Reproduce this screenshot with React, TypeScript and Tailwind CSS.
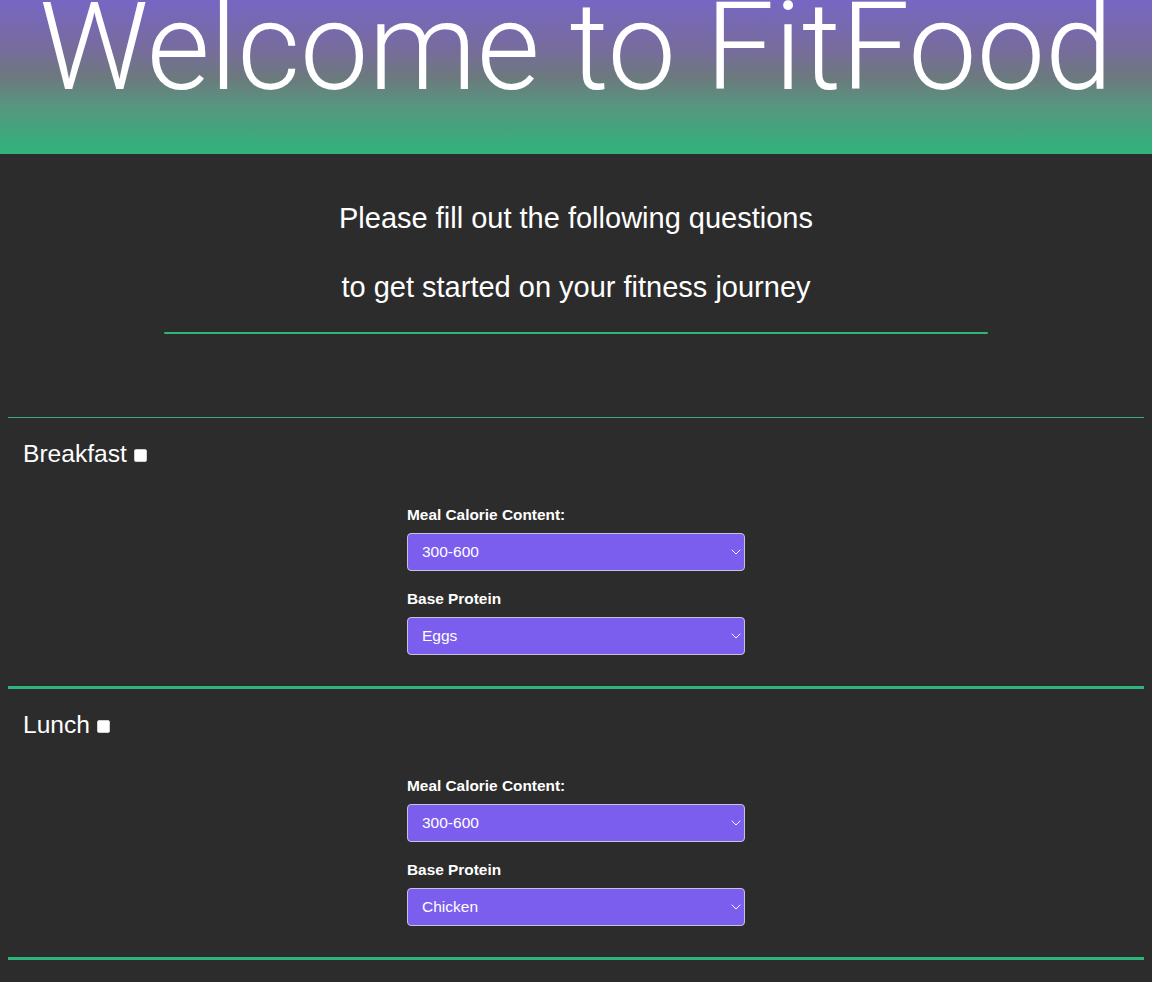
import React from "react";

type Meal = {
  name: string;
  calories: string;
  protein: string;
};

const meals: Meal[] = [
  { name: "Breakfast", calories: "300-600", protein: "Eggs" },
  { name: "Lunch", calories: "300-600", protein: "Chicken" },
];

const calorieOptions = ["0-300", "300-600", "600-900", "900+"];
const proteinOptions = ["Eggs", "Chicken", "Beef", "Fish", "Tofu", "Beans"];

function Chevron() {
  return (
    <svg
      className="pointer-events-none absolute right-[4px] top-1/2 -translate-y-1/2"
      width="10"
      height="6"
      viewBox="0 0 10 6"
      fill="none"
    >
      <path d="M1 1l4 4 4-4" stroke="white" strokeWidth="1" strokeLinecap="round" strokeLinejoin="round" />
    </svg>
  );
}

function Dropdown({ value, options }: { value: string; options: string[] }) {
  return (
    <div className="relative">
      <select
        defaultValue={value}
        className="appearance-none block w-full h-[38px] pl-[14px] pr-6 bg-[#7b5eed] text-white text-[15.5px] border border-[#c7c2dc] rounded-[4px] outline-none"
      >
        {options.map((o) => (
          <option key={o} value={o}>
            {o}
          </option>
        ))}
      </select>
      <Chevron />
    </div>
  );
}

function MealSection({ meal, first }: { meal: Meal; first: boolean }) {
  return (
    <section
      className={`mx-2 pt-[22px] pb-[31px] border-b-[3px] border-b-[#2fb47c] ${
        first ? "border-t border-t-[#3ea67c]" : ""
      }`}
    >
      <h2 className="pl-[15px] text-[24.6px] leading-[28px] text-white flex items-center">
        {meal.name}
        <input
          type="checkbox"
          className="appearance-none ml-[7px] mt-[3px] w-[13px] h-[13px] bg-white rounded-[2px] border border-[#d0d0d0]"
        />
      </h2>
      <div className="w-[338px] mx-auto mt-[38px]">
        <label className="block text-[15.4px] leading-[18px] font-bold text-white mb-[9px]">
          Meal Calorie Content:
        </label>
        <Dropdown value={meal.calories} options={calorieOptions} />
        <label className="block text-[15.4px] leading-[18px] font-bold text-white mt-[19px] mb-[9px]">
          Base Protein
        </label>
        <Dropdown value={meal.protein} options={proteinOptions} />
      </div>
    </section>
  );
}

export default function App() {
  return (
    <div className="min-h-screen bg-[#2c2c2c] font-['Liberation_Sans',Helvetica,Arial,sans-serif]">
      {/* Header */}
      <header className="h-[154px] overflow-hidden bg-[linear-gradient(to_bottom,#7866c4_0%,#776c9c_32%,#6c797e_50%,#56977f_70%,#2fb37c_100%)]">
        <h1 className="-mt-[13px] text-center text-white text-[122px] leading-none font-light font-['Roboto',sans-serif] whitespace-nowrap">
          Welcome to FitFood
        </h1>
      </header>

      {/* Intro */}
      <div className="pt-[47px] text-center text-white text-[29px] leading-[34px]">
        <p>Please fill out the following questions</p>
        <p className="mt-[35px]">to get started on your fitness journey</p>
        <div className="w-[824px] h-[2px] mx-auto mt-[28px] bg-[#2fb47c] rounded-[1px]" />
      </div>

      {/* Meals */}
      <form className="mt-[83px] pb-10">
        {meals.map((meal, i) => (
          <MealSection key={meal.name} meal={meal} first={i === 0} />
        ))}
      </form>
    </div>
  );
}
